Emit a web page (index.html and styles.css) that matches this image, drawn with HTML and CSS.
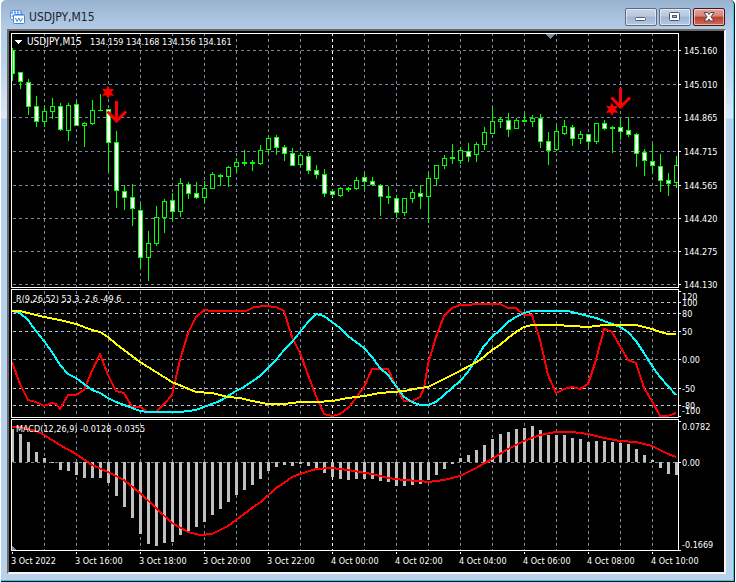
FILE: index.html
```html
<!DOCTYPE html>
<html lang="en">
<head>
    <meta charset="UTF-8">
    <title>USDJPY,M15</title>
    <link rel="stylesheet" href="styles.css">
</head>
<body>
<div class="window">
    <div class="title-bar">
        <svg class="title-icon" viewBox="0 0 15 14" width="15" height="14">
            <rect x="0.5" y="0.5" width="11" height="9" rx="1" fill="#eef5ff" stroke="#5b96e0"/>
            <path d="M1 2.500h10" stroke="#5b96e0" stroke-width="2" stroke-dasharray="2 1"/>
            <path d="M2 7l1-2 1 2" fill="none" stroke="#5b96e0"/>
            <rect x="3.500" y="4.500" width="11" height="9" rx="1" fill="#fff" stroke="#4482d8"/>
            <path d="M4 5.500h10" stroke="#8db8f0"/>
            <path d="M5.500 8l1.500 3.500L9 8l1.500 3.500L12.500 8" fill="none" stroke="#4482d8"/>
        </svg>
        <h1 class="title">USDJPY,M15</h1>
        <div class="controls">
            <button class="control" aria-label="Minimize">
                <svg viewBox="0 0 12 12" width="12" height="12"><rect x="0.5" y="6.500" width="10" height="3" rx="1" fill="#fff" stroke="#50586a"/></svg>
            </button>
            <button class="control" aria-label="Maximize">
                <svg viewBox="0 0 12 12" width="12" height="12"><rect x="0.5" y="1.500" width="10" height="8" rx="1" fill="#fff" stroke="#50586a"/><rect x="3.500" y="4.500" width="4" height="2" fill="#8fb0d0" stroke="#50586a"/></svg>
            </button>
            <button class="control close" aria-label="Close">
                <svg viewBox="0 0 12 12" width="12" height="12"><path d="M1 1.500h3.500L6 3.500l1.500-2H11L8 5.800l3 4.200H7.500L6 8l-1.500 2H1l3-4.200z" fill="#fff" stroke="#4d4552"/></svg>
            </button>
        </div>
    </div>
    <div class="client">
        <svg class="pane" id="price" viewBox="9 33 715 256">
            <g class="grid"></g>
            <g class="candles"></g>
            <path class="marker" d="M545 34h11l-5.500 5z"/>
            <g class="signals">
                <path class="star" d="M108 85.500l1.700 3.700 4.300-.4-2.600 3.500 2.600 3.500-4.300-.4-1.700 3.700-1.700-3.700-4.300.4 2.600-3.500-2.600-3.500 4.300.4z"/>
                <path class="arrow" d="M116.500 101v20M107.500 111.500l9 9.500 9.500-9.500"/>
                <path class="star" d="M612 102.500l1.700 3.700 4.300-.4-2.600 3.500 2.600 3.500-4.300-.4-1.700 3.700-1.700-3.700-4.300.4 2.600-3.500-2.600-3.500 4.300.4z"/>
                <path class="arrow" d="M620.500 88v19M611.500 97.500l9 9.500 9.500-9.500"/>
            </g>
            <rect class="frame" x="11.500" y="33.500" width="667" height="254"/>
            <path fill="#fff" d="M15 40h7l-3.500 4z"/>
            <text class="symbol" x="27" y="45">USDJPY,M15</text>
            <text x="90" y="45">134.159 134.168 134.156 134.161</text>
            <g class="scale"></g>
        </svg>
        <svg class="pane" id="range" viewBox="9 289 715 130">
            <g class="grid"></g>
            <g class="lines"></g>
            <rect class="frame" x="11.500" y="289.500" width="667" height="128"/>
            <text x="16" y="302">R(9,26,52) 53.3 -2.6 -49.6</text>
            <g class="scale"></g>
        </svg>
        <svg class="pane" id="macd" viewBox="9 419 715 133">
            <g class="grid"></g>
            <g class="bars"></g>
            <g class="lines"></g>
            <path class="marker" d="M12 546l5 5h-5z"/>
            <rect class="frame" x="11.500" y="419.500" width="667" height="131"/>
            <text x="16" y="432">MACD(12,26,9) -0.0128 -0.0355</text>
            <g class="scale"></g>
        </svg>
        <svg class="pane" id="time" viewBox="9 552 715 20">
            <g class="scale"></g>
        </svg>
    </div>
</div>
<script src="chart.js"></script>
</body>
</html>
```
FILE: styles.css
```css
*{
    box-sizing: border-box;
}
body{
    margin: 0;
    padding: 0 1px;
    background-color: #fff;
    font-family: "DejaVu Sans Condensed", "DejaVu Sans", sans-serif;
}
.window{
    padding: 0 8px 7px 6px;
    border-right: 1px solid #10141a;
    border-bottom: 1px solid #10141a;
    border-top-left-radius: 5px;
    border-top-right-radius: 5px;
    background: linear-gradient(#98b3d0, #b4cce6 29px, #b9d1ea 60px, #dbe8f6 118px, #b9d1ea 119px);
    box-shadow: inset -1px -1px 0 #35c8ec;
}
.title-bar{
    display: flex;
    align-items: center;
    height: 29px;
    padding: 5px 1px 0 3px;
}
.title-icon{
    margin-right: 4px;
}
.title{
    margin: 0;
    font-size: 12px;
    font-weight: normal;
    line-height: 16px;
    color: #1a2230;
}
.controls{
    display: flex;
    gap: 2px;
    margin-left: auto;
}
.control{
    display: flex;
    align-items: center;
    justify-content: center;
    width: 32px;
    height: 18px;
    padding: 0;
    border: 1px solid #5c6b80;
    border-radius: 2px;
    background: linear-gradient(#c5d5e8, #b6c9df 45%, #9db5d0 50%, #b4cae4);
    box-shadow: inset 0 0 0 1px rgba(255, 255, 255, 0.5);
}
.close{
    border-color: #46141c;
    background: linear-gradient(#e3a49a, #d6857a 45%, #b8402c 50%, #cf6c55);
}
.client{
    padding-top: 2px;
    border-top: 2px solid #696969;
    border-left: 2px solid #696969;
    border-right: 2px solid #f4f4f4;
    border-bottom: 2px solid #f4f4f4;
    background-color: #000;
}

/* chart */
.pane{
    display: block;
    width: 100%;
    height: auto;
    shape-rendering: crispEdges;
}
.pane text{
    font-size: 9px;
    fill: #fff;
}
.pane .symbol{
    font-size: 10px;
}
.frame{
    fill: none;
    stroke: #fff;
}
.grid line{
    stroke: #778899;
    stroke-dasharray: 3 3;
}
.grid .level{
    stroke: #c0c0c0;
}
.grid .day{
    stroke: #fff;
}
.scale line{
    stroke: #fff;
}
.candles line{
    stroke: #0f0;
}
.candles rect{
    stroke: #0f0;
    fill: #000;
}
.candles .down{
    fill: #fff;
}
.marker{
    fill: #778899;
}
.signals{
    shape-rendering: auto;
}
.star{
    fill: #f00;
}
.arrow{
    fill: none;
    stroke: #f00;
    stroke-width: 3;
}
.bars rect{
    fill: #c0c0c0;
}
.lines polyline{
    fill: none;
    stroke-width: 2;
    stroke-linejoin: round;
}
.red{
    stroke: #f00;
}
.aqua{
    stroke: #0ff;
}
.yellow{
    stroke: #ff0;
}
```
FILE: chart.js
```js
var LEFT = 12, STEP = 8, RIGHT = 678;

// high, body top, body bottom, low, closed down
var candles = [
    [48,50,73,80,1],[72,72,81,88,1],[79,82,106,114,1],[96,106,121,126,1],[106,111,121,126,0],[98,106,111,118,0],
    [103,106,129,130,1],[103,105,130,140,0],[101,104,125,125,1],[122,123,125,146,0],[100,110,123,124,0],[94,110,110,110,0],
    [109,109,142,171,1],[131,142,190,207,1],[185,191,197,209,1],[184,197,208,225,1],[204,210,257,267,1],[231,243,257,280,0],
    [206,217,243,245,0],[199,201,217,232,0],[193,200,211,221,1],[178,183,211,216,0],[182,184,193,198,1],[182,193,197,198,1],
    [181,188,197,202,0],[172,174,188,188,0],[174,175,176,185,0],[166,167,176,186,0],[158,162,166,172,0],[150,162,163,165,0],
    [160,162,163,170,0],[145,150,163,164,0],[136,138,149,153,0],[135,137,147,154,1],[145,147,153,160,1],[148,153,165,165,1],
    [153,155,164,166,0],[153,156,170,173,1],[165,170,174,178,1],[169,174,193,196,1],[189,191,194,196,1],[187,188,195,196,0],
    [187,188,189,191,0],[177,180,188,189,0],[173,177,181,189,1],[177,181,184,185,1],[184,185,196,215,1],[186,196,197,203,0],
    [195,198,212,217,1],[198,198,212,215,0],[189,192,198,202,0],[185,193,196,208,1],[173,178,196,222,0],[165,165,178,185,0],
    [155,158,165,168,0],[144,157,158,163,0],[147,150,160,163,0],[143,151,156,161,1],[142,144,154,161,0],[127,132,144,149,0],
    [107,121,133,133,0],[117,119,121,127,0],[113,120,129,136,1],[118,120,128,128,0],[113,120,121,121,0],[115,118,121,126,0],
    [114,118,141,147,1],[132,141,150,164,1],[126,131,149,150,0],[120,126,133,134,0],[125,127,138,145,1],[131,134,138,143,0],
    [134,134,141,147,1],[123,123,141,143,0],[120,123,128,129,1],[126,127,128,152,0],[118,127,131,139,1],[117,130,134,136,1],
    [133,134,153,166,1],[149,152,160,175,1],[144,161,165,173,1],[154,166,180,191,1],[173,180,183,195,1],[156,165,182,187,0]
];

var macd = [429,434,442,452,458,463,470,471,475,478,478,478,483,496,507,518,534,544,546,543,542,535,531,527,522,515,509,
    502,495,490,485,479,471,467,465,466,464,466,469,473,477,479,480,479,479,479,481,482,486,486,485,484,480,475,469,464,
    458,455,450,445,439,434,432,429,428,426,430,435,435,435,438,439,442,441,441,442,443,444,449,455,460,468,474,475];
var MACD_ZERO = 462;

var fast = "12,362 20,384 28,400 36,402 44,406 52,403 56,404 60,409 68,395 76,395 84,390 92,371 100,354 108,375 116,391 124,393 132,407 140,407 148,412 156,412 164,404 172,395 180,360 188,333 196,317 204,310 212,311 246,311 254,307 266,306 276,307 284,311 292,337 300,353 308,375 316,396 324,414 332,416 340,414 348,408 356,398 364,387 372,369 388,369 396,387 404,401 412,401 420,397 424,388 428,364 436,337 444,316 452,308 460,305 484,304 500,304 508,308 516,308 524,315 532,315 540,340 548,375 556,393 564,389 572,387 580,389 588,384 596,360 604,329 612,332 620,346 628,360 636,363 644,388 652,401 660,416 668,416 676,413";
var middle = "12,311 20,313 28,320 36,331 44,341 52,352 60,365 68,374 76,378 84,384 92,390 100,393 108,398 116,402 124,405 132,408 140,411 148,412 180,412 188,411 196,410 204,407 212,404 220,401 228,396 236,391 244,387 260,376 268,368 276,360 284,350 292,342 300,332 308,322 316,314 324,316 332,322 340,328 348,336 356,342 364,348 372,357 380,368 388,375 396,386 404,397 412,402 420,405 428,405 436,402 444,395 452,388 460,381 468,372 476,359 484,346 492,337 500,330 508,322 516,317 524,313 532,311 568,311 580,314 596,318 612,324 620,327 628,332 636,341 644,353 652,366 660,377 668,386 676,395";
var slow = "12,311 20,311 44,317 60,320 76,324 92,330 100,332 108,337 116,344 124,350 132,356 140,362 156,372 172,382 196,392 212,393 228,397 240,398 252,401 268,404 284,404 300,402 316,402 332,401 348,398 364,396 380,393 404,391 420,388 428,387 444,379 460,371 480,360 492,350 500,345 508,338 516,332 524,327 532,325 556,325 588,327 604,325 636,325 652,329 660,332 668,334 676,334";
var signal = "12,427 20,427 36,431 44,435 60,445 76,454 92,465 108,472 124,480 140,493 156,508 172,523 188,532 200,535 212,534 228,526 240,517 252,508 262,501 276,488 284,483 292,477 300,474 316,469 332,468 348,470 372,474 388,478 404,480 420,481 428,482 444,480 460,476 476,468 492,459 508,449 524,441 540,435 556,432 572,432 588,434 604,438 620,441 636,442 652,446 660,450 668,454 676,457";

function add(parent, name, attrs, text){
    var el = document.createElementNS("http://www.w3.org/2000/svg", name);
    for(var key in attrs){
        el.setAttribute(key, attrs[key]);
    }
    if(text){
        el.textContent = text;
    }
    parent.appendChild(el);
    return el;
}
function part(id, cls){
    return document.querySelector("#" + id + " ." + cls);
}
function vline(parent, x, y1, y2, cls){
    add(parent, "line", {x1: x + 0.5, x2: x + 0.5, y1: y1, y2: y2, "class": cls || ""});
}
function hline(parent, y, x1, x2, cls){
    add(parent, "line", {x1: x1, x2: x2, y1: y + 0.5, y2: y + 0.5, "class": cls || ""});
}
function grid(id, top, bottom, rows, cls){
    var g = part(id, "grid");
    for(var x = 44; x < RIGHT; x += 32){
        vline(g, x, top, bottom, x == 332 ? "day" : "");
    }
    for(var i = 0; i < rows.length; i++){
        hline(g, rows[i], LEFT + 1, RIGHT, rows[i] == 359 ? "" : cls);
    }
}
// labels: [tick y, baseline, text]
function scale(id, x, labels){
    var g = part(id, "scale");
    for(var i = 0; i < labels.length; i++){
        hline(g, labels[i][0], RIGHT, RIGHT + 3);
        add(g, "text", {x: x, y: labels[i][1]}, labels[i][2]);
    }
}

grid("price", 33, 288, [50,84,117,151,185,218,251,284]);
grid("range", 291, 418, [302,313,331,359,388,405], "level");
grid("macd", 417, 551, [MACD_ZERO]);

scale("price", 684, [[50,54,"145.160"],[84,88,"145.010"],[117,121,"144.865"],[151,155,"144.715"],
    [185,189,"144.565"],[218,222,"144.420"],[251,255,"144.275"],[284,288,"144.130"]]);
scale("range", 682, [[291,300,"120"],[302,306,"100"],[313,317,"80"],[331,335,"50"],
    [359,363,"0.00"],[388,392,"-50"],[405,409,"-80"],[416,414,"-100"]]);
scale("macd", 682, [[421,430,"0.0782"],[462,466,"0.00"],[550,548,"-0.1669"]]);

var times = ["3 Oct 2022","3 Oct 16:00","3 Oct 18:00","3 Oct 20:00","3 Oct 22:00","4 Oct 00:00",
    "4 Oct 02:00","4 Oct 04:00","4 Oct 06:00","4 Oct 08:00","4 Oct 10:00"];
for(var t = 0; t < times.length; t++){
    vline(part("time", "scale"), LEFT + t * 64, 552, 554);
    add(part("time", "scale"), "text", {x: LEFT - 1 + t * 64, y: 564}, times[t]);
}

for(var i = 0; i < candles.length; i++){
    var c = candles[i], x = LEFT + i * STEP;
    var left = Math.max(x - 2, LEFT), right = Math.min(x + 2, RIGHT);
    var g = part("price", "candles");
    vline(g, x, c[0], c[3] + 1);
    if(c[1] == c[2]){
        hline(g, c[1], left, right + 1);
    }else{
        add(g, "rect", {x: left + 0.5, y: c[1] + 0.5, width: right - left, height: c[2] - c[1], "class": c[4] ? "down" : "up"});
    }
    add(part("macd", "bars"), "rect", {x: x - 1, y: Math.min(macd[i], MACD_ZERO), width: 3, height: Math.abs(macd[i] - MACD_ZERO)});
}

add(part("range", "lines"), "polyline", {points: fast, "class": "red"});
add(part("range", "lines"), "polyline", {points: middle, "class": "aqua"});
add(part("range", "lines"), "polyline", {points: slow, "class": "yellow"});
add(part("macd", "lines"), "polyline", {points: signal, "class": "red"});
```
